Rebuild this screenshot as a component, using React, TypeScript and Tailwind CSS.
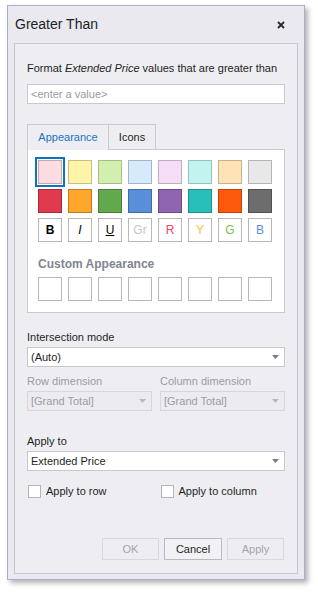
import React from 'react';

const font = { fontFamily: '"Liberation Sans", Arial, sans-serif' };

const row1 = [
  ['bg-[#fddde2]', 'border-[#c8a8ad]'],
  ['bg-[#fff5aa]', 'border-[#c9bd7e]'],
  ['bg-[#d3efae]', 'border-[#a7bf86]'],
  ['bg-[#d7eafc]', 'border-[#a6b6c8]'],
  ['bg-[#f4ddf5]', 'border-[#c2aac2]'],
  ['bg-[#c3f3ef]', 'border-[#94c0bd]'],
  ['bg-[#fde3b5]', 'border-[#c8b08a]'],
  ['bg-[#e8e8e8]', 'border-[#b5b5b5]'],
];

const row2 = [
  ['bg-[#e03a4e]', 'border-[#a82a39]'],
  ['bg-[#fea72a]', 'border-[#bf7d1f]'],
  ['bg-[#62a84c]', 'border-[#497f39]'],
  ['bg-[#598ed8]', 'border-[#426ba3]'],
  ['bg-[#8f65b2]', 'border-[#6b4c86]'],
  ['bg-[#27bfb7]', 'border-[#1d908a]'],
  ['bg-[#fe5a0b]', 'border-[#bf4408]'],
  ['bg-[#6d6d6d]', 'border-[#525252]'],
];

function Arrow({ muted }: { muted?: boolean }) {
  return (
    <svg width="7" height="4" viewBox="0 0 7 4" className="shrink-0">
      <path d="M0 0 H7 L3.5 4 Z" fill={muted ? '#b8b8c0' : '#7a7a80'} />
    </svg>
  );
}

function Combo({ value, disabled }: { value: string; disabled?: boolean }) {
  return (
    <div
      className={`h-5 flex items-center justify-between pl-[3px] pr-[5px] border text-[11px] ${
        disabled ? 'bg-[#ececf0] border-[#d6d6de] text-[#9c9ca2]' : 'bg-white border-[#c8c8d2] text-[#1e1e1e]'
      }`}
    >
      <span>{value}</span>
      <Arrow muted={disabled} />
    </div>
  );
}

function Check({ label }: { label: string }) {
  return (
    <div className="h-4 flex items-center gap-[5px] text-[11px] leading-4 text-[#1e1e1e]">
      <div className="w-[13px] h-[13px] bg-white border border-[#b4b4bc]" />
      <span>{label}</span>
    </div>
  );
}

export default function App() {
  return (
    <div className="w-[318px] h-[596px] bg-white pt-[5px] pl-[7px]" style={font}>
      <div className="w-[298px] h-[575px] bg-[#e9e9ef] border border-[#a9adcf] shadow-[3px_3px_5px_rgba(0,0,0,0.3)] flex flex-col">
        <div className="h-[37px] flex items-center justify-between pl-[7px] pr-[19px]">
          <span className="text-[14px] text-[#1e1e1e]">Greater Than</span>
          <svg width="8" height="8" viewBox="0 0 8 8">
            <path d="M1 1 L7 7 M7 1 L1 7" stroke="#2a2a2a" strokeWidth="1.8" />
          </svg>
        </div>
        <div className="ml-[6px] w-[284px] h-[531px] bg-[#eeeef2] border border-[#c6c6d6] pt-[16px] pl-[12px] pr-[12px] flex flex-col">
          <div className="h-4 text-[11px] leading-4 text-[#1e1e1e] whitespace-nowrap">
            Format <i>Extended Price</i> values that are greater than
          </div>
          <div className="mt-[8px] h-5 bg-white border border-[#c8c8d2] flex items-center pl-[3px] text-[11px] text-[#9a9aa2]">
            &lt;enter a value&gt;
          </div>

          <div className="mt-[20px] flex h-[25px]">
            <div className="w-[82px] border border-b-0 border-[#c8c8d6] bg-[#eeeef2] flex items-center justify-center text-[11px] text-[#1a73c8] relative z-10 h-[26px]">
              Appearance
            </div>
            <div className="w-[47px] border border-l-0 border-[#c8c8d6] border-b-0 flex items-center justify-center text-[11px] text-[#1e1e1e]">
              Icons
            </div>
          </div>
          <div className="h-[164px] bg-white border border-[#c8c8d6] pt-[10px] pl-[10px]">
            <div className="grid grid-cols-[repeat(8,24px)] gap-x-[6px] gap-y-[5px]">
              {row1.map(([bg, bd], i) => (
                <div key={i} className="relative w-6 h-6">
                  <div className={`w-6 h-6 border ${bg} ${bd}`} />
                  {i === 0 && (
                    <div className="absolute -inset-[3px] border-2 border-[#0b72c4]" />
                  )}
                </div>
              ))}
              {row2.map(([bg, bd], i) => (
                <div key={i} className={`w-6 h-6 border ${bg} ${bd}`} />
              ))}
              <div className="w-6 h-6 border border-[#b8b8b8] flex items-center justify-center text-[12px] font-bold text-black">B</div>
              <div className="w-6 h-6 border border-[#b8b8b8] flex items-center justify-center text-[12px] italic text-black">I</div>
              <div className="w-6 h-6 border border-[#b8b8b8] flex items-center justify-center text-[12px] underline text-black">U</div>
              <div className="w-6 h-6 border border-[#b8b8b8] flex items-center justify-center text-[12px] text-[#c8c8c8]">Gr</div>
              <div className="w-6 h-6 border border-[#b8b8b8] flex items-center justify-center text-[12px] text-[#e8466c]">R</div>
              <div className="w-6 h-6 border border-[#b8b8b8] flex items-center justify-center text-[12px] text-[#f2c040]">Y</div>
              <div className="w-6 h-6 border border-[#b8b8b8] flex items-center justify-center text-[12px] text-[#7cc250]">G</div>
              <div className="w-6 h-6 border border-[#b8b8b8] flex items-center justify-center text-[12px] text-[#5b8fda]">B</div>
            </div>
            <div className="mt-[14px] h-4 text-[12px] leading-4 font-bold text-[#80858f]">Custom Appearance</div>
            <div className="mt-[5px] grid grid-cols-[repeat(8,24px)] gap-x-[6px]">
              {Array.from({ length: 8 }).map((_, i) => (
                <div key={i} className="w-6 h-6 border border-[#b8b8b8]" />
              ))}
            </div>
          </div>

          <div className="mt-[16px] h-4 text-[11px] leading-4 text-[#1e1e1e]">Intersection mode</div>
          <div className="mt-[2px]">
            <Combo value="(Auto)" />
          </div>
          <div className="mt-[6px] grid grid-cols-2 gap-x-[8px]">
            <div>
              <div className="h-4 text-[11px] leading-4 text-[#9c9ca2]">Row dimension</div>
              <div className="mt-[2px]">
                <Combo value="[Grand Total]" disabled />
              </div>
            </div>
            <div>
              <div className="h-4 text-[11px] leading-4 text-[#9c9ca2]">Column dimension</div>
              <div className="mt-[2px]">
                <Combo value="[Grand Total]" disabled />
              </div>
            </div>
          </div>

          <div className="mt-[22px] h-4 text-[11px] leading-4 text-[#1e1e1e]">Apply to</div>
          <div className="mt-[2px]">
            <Combo value="Extended Price" />
          </div>
          <div className="mt-[12px] grid grid-cols-2 gap-x-[8px] pl-px">
            <Check label="Apply to row" />
            <Check label="Apply to column" />
          </div>

          <div className="mt-[39px] flex justify-end gap-[5px] pr-[1px]">
            <div className="w-[57px] h-[22px] border border-[#d8d8e0] flex items-center justify-center text-[11px] text-[#a4a4aa]">OK</div>
            <div className="w-[58px] h-[22px] border border-[#b8b8c6] bg-[#f2f2f5] flex items-center justify-center text-[11px] text-[#1e1e1e]">Cancel</div>
            <div className="w-[57px] h-[22px] border border-[#d8d8e0] flex items-center justify-center text-[11px] text-[#a4a4aa]">Apply</div>
          </div>
        </div>
      </div>
    </div>
  );
}
